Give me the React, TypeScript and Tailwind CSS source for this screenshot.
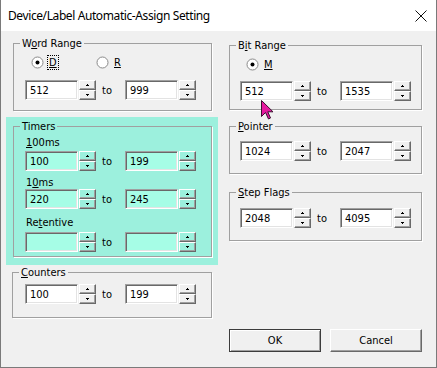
import type { ReactNode } from "react";
import clsx from "clsx";

const font = "font-['DejaVu_Sans_Condensed','DejaVu_Sans',sans-serif] text-[11px] leading-[13px]";

function U({ children }: { children: ReactNode }) {
  return <span className="underline underline-offset-[1px]">{children}</span>;
}

function Arrow({ up }: { up?: boolean }) {
  return (
    <svg width="3" height="2" viewBox="0 0 3 2">
      {up ? <path d="M1 0 H2 V1 H3 V2 H0 V1 H1 Z" fill="#000" /> : <path d="M0 0 H3 V1 H2 V2 H1 V1 H0 Z" fill="#000" />}
    </svg>
  );
}

function SpinButton({ up, teal }: { up?: boolean; teal?: boolean }) {
  return (
    <div
      className={clsx(
        "h-[10px] w-[17px] flex items-center justify-center border border-t-white border-l-white border-b-[#696969] border-r-[#696969] shadow-[inset_-1px_-1px_0_#a0a0a0]",
        teal ? "bg-[#9cf0dd]" : "bg-[#f0f0f0]"
      )}
    >
      <Arrow up={up} />
    </div>
  );
}

function Spin({ value, teal }: { value: string; teal?: boolean }) {
  return (
    <div className="flex">
      <div
        className={clsx(
          "w-[53px] h-[20px] flex items-center pl-[4px] text-black border border-t-[#a0a0a0] border-l-[#a0a0a0] border-b-white border-r-white shadow-[inset_1px_1px_0_#696969,inset_-1px_-1px_0_#e3e3e3]",
          teal ? "bg-[#a6fde6]" : "bg-white"
        )}
      >
        {value}
      </div>
      <div className="ml-[1px] flex flex-col">
        <SpinButton up teal={teal} />
        <SpinButton teal={teal} />
      </div>
    </div>
  );
}

function RangeRow({ from, to, teal }: { from: string; to: string; teal?: boolean }) {
  return (
    <div className="flex items-center">
      <Spin value={from} teal={teal} />
      <span className="w-[29px] pl-[6px]">to</span>
      <Spin value={to} teal={teal} />
    </div>
  );
}

function Group({ title, className, children }: { title: ReactNode; className?: string; children: ReactNode }) {
  return (
    <fieldset className={clsx("border border-[#a0a0a0] shadow-[1px_1px_0_#fff]", className)}>
      <legend className="ml-[6px] px-[2px] leading-[13px]">{title}</legend>
      {children}
    </fieldset>
  );
}

function Radio({ checked, label, focus }: { checked?: boolean; label: ReactNode; focus?: boolean }) {
  return (
    <div className="flex items-center">
      <svg width="13" height="13" viewBox="0 0 13 13">
        <circle cx="6.5" cy="6.5" r="5.5" fill="#fff" stroke="#8a8a8a" />
        {checked && <circle cx="6.5" cy="6.5" r="2" fill="#000" />}
      </svg>
      <span className={clsx("ml-[4px] px-[1px]", focus && "outline outline-1 outline-dotted outline-black")}>{label}</span>
    </div>
  );
}

function Label({ children, className }: { children: ReactNode; className?: string }) {
  return <div className={clsx("pl-[1px]", className)}>{children}</div>;
}

export default function App() {
  return (
    <div className={clsx("w-[437px] h-[368px] flex flex-col border-x border-b border-[#7a7a7a] text-black", font)}>
      <div className="h-[31px] bg-white flex items-center justify-between pl-[7px] pr-[9px] font-['Noto_Sans','Open_Sans',sans-serif] text-[12px] tracking-[-0.4px]">
        <span>Device/Label Automatic-Assign Setting</span>
        <svg width="12" height="12" viewBox="0 0 12 12">
          <path d="M0.5 0.5 L11.5 11.5 M11.5 0.5 L0.5 11.5" stroke="#111" strokeWidth="1" />
        </svg>
      </div>
      <div className="flex-1 bg-[#f0f0f0] flex relative">
        <div className="w-[217px] flex flex-col">
          <Group title={<>W<U>o</U>rd Range</>} className="ml-[12px] mt-[6px] w-[199px] h-[74px]">
            <div className="pl-[17px] mt-[6px] flex">
              <div className="w-[65px]">
                <Radio checked focus label={<U>D</U>} />
              </div>
              <Radio label={<U>R</U>} />
            </div>
            <div className="pl-[11px] mt-[11px]">
              <RangeRow from="512" to="999" />
            </div>
          </Group>
          <div className="ml-[5px] mt-[6px] w-[212px] h-[148px] bg-[#9cf0dd] pt-[3px]">
            <Group title="Timers" className="ml-[7px] w-[199px] h-[137px]">
              <div className="pl-[11px] pt-[3px]">
                <Label>
                  <U>1</U>00ms
                </Label>
                <div className="mt-[2px]">
                  <RangeRow from="100" to="199" teal />
                </div>
                <Label className="mt-[5px]">
                  1<U>0</U>ms
                </Label>
                <RangeRow from="220" to="245" teal />
                <Label className="mt-[7px]">
                  Re<U>t</U>entive
                </Label>
                <div className="mt-[3px]">
                  <RangeRow from="" to="" teal />
                </div>
              </div>
            </Group>
          </div>
          <Group title={<><U>C</U>ounters</>} className="ml-[11px] mt-[1px] w-[200px] h-[52px]">
            <div className="pl-[12px] mt-[5px]">
              <RangeRow from="100" to="199" />
            </div>
          </Group>
        </div>
        <div className="ml-[11px] flex flex-col">
          <Group title={<>B<U>i</U>t Range</>} className="mt-[8px] w-[193px] h-[71px]">
            <div className="pl-[16px] mt-[6px]">
              <Radio checked label={<U>M</U>} />
            </div>
            <div className="pl-[10px] mt-[10px]">
              <RangeRow from="512" to="1535" />
            </div>
          </Group>
          <Group title={<><U>P</U>ointer</>} className="mt-[10px] w-[193px] h-[54px]">
            <div className="pl-[10px] mt-[8px]">
              <RangeRow from="1024" to="2047" />
            </div>
          </Group>
          <Group title={<><U>S</U>tep Flags</>} className="mt-[12px] w-[193px] h-[55px]">
            <div className="pl-[10px] mt-[9px]">
              <RangeRow from="2048" to="4095" />
            </div>
          </Group>
          <div className="mt-[88px] flex gap-[9px]">
            <button className="w-[92px] h-[23px] bg-[#f0f0f0] border border-[#3c3c3c] shadow-[inset_1px_1px_0_#fff,inset_-1px_-1px_0_#a0a0a0]">
              OK
            </button>
            <button className="w-[92px] h-[23px] bg-[#f0f0f0] border border-t-white border-l-white border-b-[#696969] border-r-[#696969] shadow-[inset_-1px_-1px_0_#a0a0a0]">
              Cancel
            </button>
          </div>
        </div>
        <svg className="absolute left-[260px] top-[69px]" width="13" height="20" viewBox="0 0 13 20">
          <path d="M0.5 0.5 L0.5 16.5 L4.5 12.5 L7.5 19 L9.5 18 L6.8 11.8 L12 11.8 Z" fill="#e5199f" stroke="#3a1030" strokeWidth="1" />
        </svg>
      </div>
    </div>
  );
}
